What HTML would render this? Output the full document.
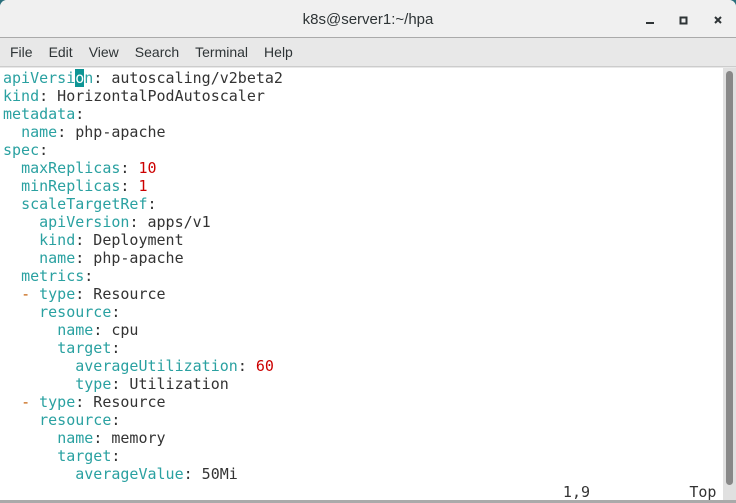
<!DOCTYPE html>
<html><head><style>
*{margin:0;padding:0;box-sizing:border-box}
body{width:736px;height:503px;background:#2a6f7c;overflow:hidden;position:relative;font-family:"Liberation Sans",sans-serif}
.win{position:absolute;left:0;top:0;width:736px;height:503px;background:#e8e8e8;border-radius:7px 7px 0 0;overflow:hidden}
.title{height:38px;background:#f0f0f0;border-bottom:1px solid #aaa;text-align:center;font-size:15px;line-height:40px;color:#2e3436}
.menu{height:29px;background:#e8e8e8;border-bottom:1px solid #ccc;font-size:14px;color:#2e3436;line-height:28px;padding-left:10px}
.menu span{margin-right:16px}
.term{position:absolute;left:0;top:68px;width:723px;height:432px;background:#fff;font-family:"DejaVu Sans Mono",monospace;font-size:15px;line-height:18px;color:#333;white-space:pre;padding-left:3px;padding-top:1px}
.k{color:#2aa1a1}.n{color:#cc0000}.d{color:#c4600a}
.cur{background:#0d9595;color:#fff}
.sb{position:absolute;left:723px;top:68px;width:13px;height:432px;background:#e0e0e0}
.th{position:absolute;left:726px;top:71px;width:7px;height:414px;background:#888;border-radius:4px}
.bot{position:absolute;left:0;top:500px;width:736px;height:3px;background:#aaa}
</style></head><body>
<div class="win">
<div class="title">k8s@server1:~/hpa
<svg style="position:absolute;left:640px;top:14px" width="90" height="14"><rect x="6" y="8" width="8" height="2" fill="#2e3436"/><rect x="40.5" y="3.5" width="6" height="6" fill="none" stroke="#2e3436" stroke-width="2"/><path d="M75 3l6 6M81 3l-6 6" stroke="#2e3436" stroke-width="2"/></svg></div>
<div class="menu"><span>File</span><span>Edit</span><span>View</span><span>Search</span><span>Terminal</span><span>Help</span></div>
<div class="term"><span class="k">apiVersi</span><span class="cur">o</span><span class="k">n</span>: autoscaling/v2beta2
<span class="k">kind</span>: HorizontalPodAutoscaler
<span class="k">metadata</span>:
  <span class="k">name</span>: php-apache
<span class="k">spec</span>:
  <span class="k">maxReplicas</span>: <span class="n">10</span>
  <span class="k">minReplicas</span>: <span class="n">1</span>
  <span class="k">scaleTargetRef</span>:
    <span class="k">apiVersion</span>: apps/v1
    <span class="k">kind</span>: Deployment
    <span class="k">name</span>: php-apache
  <span class="k">metrics</span>:
  <span class="d">-</span> <span class="k">type</span>: Resource
    <span class="k">resource</span>:
      <span class="k">name</span>: cpu
      <span class="k">target</span>:
        <span class="k">averageUtilization</span>: <span class="n">60</span>
        <span class="k">type</span>: Utilization
  <span class="d">-</span> <span class="k">type</span>: Resource
    <span class="k">resource</span>:
      <span class="k">name</span>: memory
      <span class="k">target</span>:
        <span class="k">averageValue</span>: 50Mi
                                                              1,9           Top</div>
<div class="sb"></div><div class="th"></div>
<div class="bot"></div>
</div>
</body></html>
